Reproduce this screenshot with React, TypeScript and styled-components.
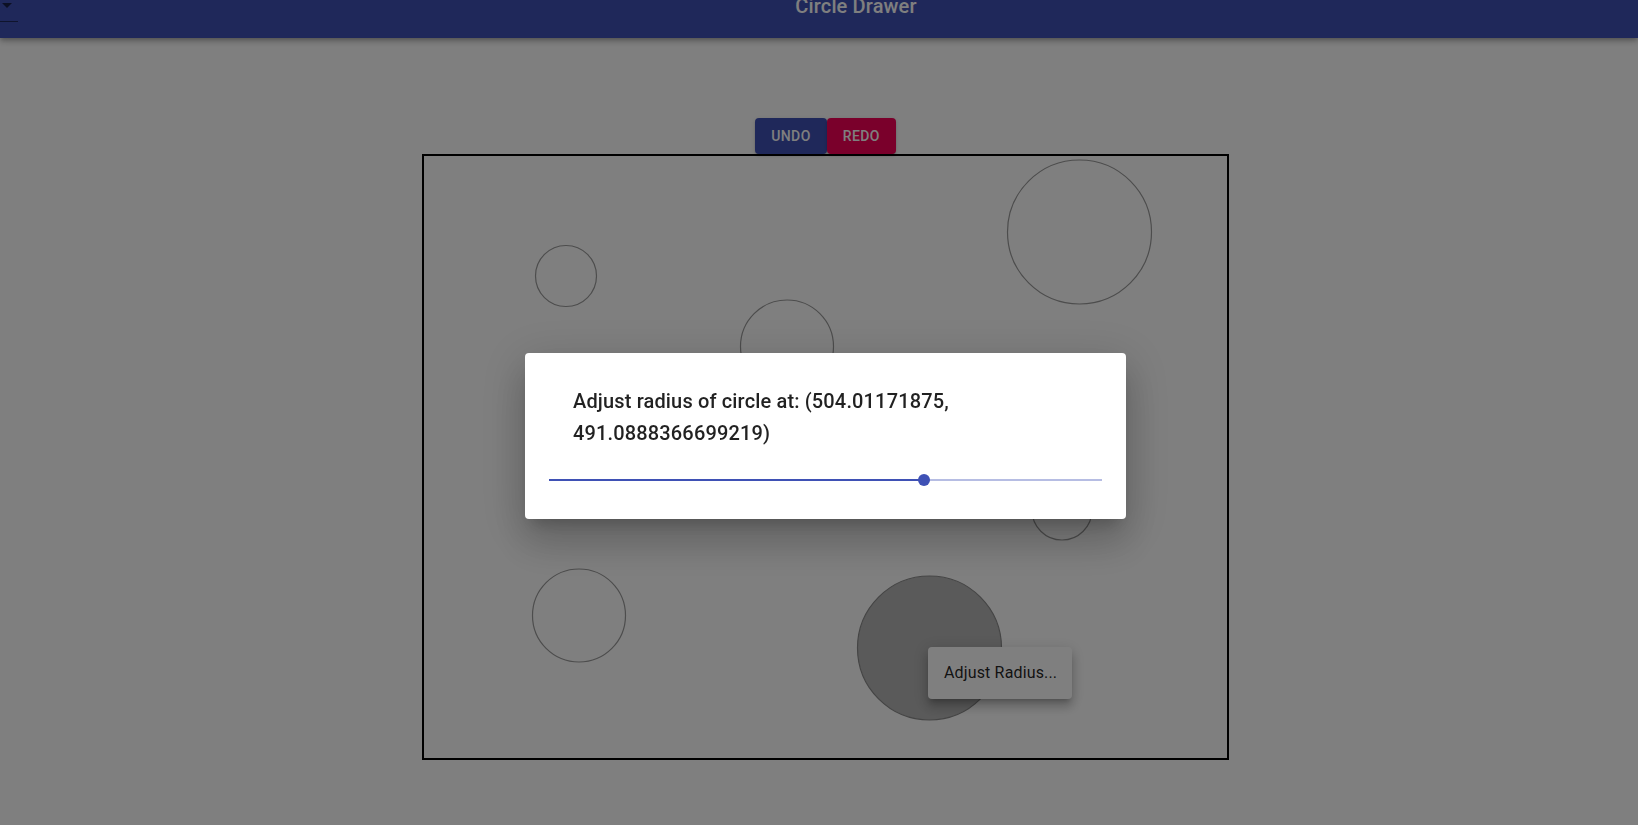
import React from "react";
import styled, { createGlobalStyle } from "styled-components";

const GlobalStyle = createGlobalStyle`
  html, body {
    margin: 0;
    padding: 0;
    background: #ffffff;
    font-family: Roboto, "Liberation Sans", Arial, sans-serif;
    overflow: hidden;
  }
  * { box-sizing: border-box; }
`;

const AppBar = styled.header`
  position: relative;
  z-index: 2;
  display: flex;
  align-items: flex-start;
  height: 38px;
  overflow: hidden;
  background: #3f51b5;
  color: #ffffff;
  box-shadow: 0px 2px 4px -1px rgba(0, 0, 0, 0.2), 0px 4px 5px 0px rgba(0, 0, 0, 0.14),
    0px 1px 10px 0px rgba(0, 0, 0, 0.12);
`;

const SelectBox = styled.div`
  box-sizing: content-box;
  width: 18px;
  height: 21px;
  flex: none;
  display: flex;
  align-items: flex-start;
  border-bottom: 1px solid rgba(0, 0, 0, 0.5);
`;

const Arrow = styled.span`
  display: block;
  margin: 3px 0 0 2px;
  width: 0;
  height: 0;
  border-left: 5px solid transparent;
  border-right: 5px solid transparent;
  border-top: 5px solid rgba(0, 0, 0, 0.6);
`;

const Title = styled.h1`
  flex: 1;
  margin: -10px 0 0 0;
  padding-left: 56px;
  text-align: center;
  font-size: 20px;
  font-weight: 500;
  line-height: 32px;
  letter-spacing: 0.0075em;
`;

const Main = styled.main`
  display: flex;
  flex-direction: column;
  align-items: center;
  padding: 80px 0 0 13px;
`;

const ButtonRow = styled.div`
  display: flex;
`;

const ActionButton = styled.button<{ $bg: string }>`
  display: inline-flex;
  align-items: center;
  justify-content: center;
  min-width: 64px;
  height: 36px;
  padding: 6px 16px;
  border: none;
  border-radius: 4px;
  background: ${(p) => p.$bg};
  color: #ffffff;
  font-family: Roboto, "Liberation Sans", Arial, sans-serif;
  font-size: 14px;
  font-weight: 500;
  line-height: 1.75;
  letter-spacing: 0.02857em;
  text-transform: uppercase;
  box-shadow: 0px 3px 1px -2px rgba(0, 0, 0, 0.2), 0px 2px 2px 0px rgba(0, 0, 0, 0.14),
    0px 1px 5px 0px rgba(0, 0, 0, 0.12);
  cursor: pointer;
`;

const Canvas = styled.div`
  position: relative;
  box-sizing: content-box;
  width: 803px;
  height: 602px;
  border: 2px solid #000000;
`;

const Drawing = styled.svg`
  display: block;
`;

const ContextMenu = styled.ul<{ $x: number; $y: number }>`
  position: absolute;
  left: ${(p) => p.$x}px;
  top: ${(p) => p.$y}px;
  margin: 0;
  padding: 8px 0;
  list-style: none;
  width: 144px;
  background: #ffffff;
  border-radius: 4px;
  box-shadow: 0px 5px 5px -3px rgba(0, 0, 0, 0.2), 0px 8px 10px 1px rgba(0, 0, 0, 0.14),
    0px 3px 14px 2px rgba(0, 0, 0, 0.12);
`;

const MenuItem = styled.li`
  padding: 6px 16px;
  font-size: 16px;
  font-weight: 400;
  line-height: 24px;
  letter-spacing: 0.00938em;
  color: rgba(0, 0, 0, 0.87);
  white-space: nowrap;
`;

const Backdrop = styled.div`
  position: fixed;
  inset: 0;
  z-index: 10;
  background: rgba(0, 0, 0, 0.5);
`;

const DialogLayer = styled.div`
  position: fixed;
  inset: 0;
  z-index: 11;
  display: flex;
  align-items: center;
  justify-content: center;
  padding: 46px 0 0 13px;
`;

const DialogPaper = styled.div`
  width: 601px;
  display: flex;
  flex-direction: column;
  padding: 32px 24px 25px;
  background: #ffffff;
  border-radius: 4px;
  box-shadow: 0px 11px 15px -7px rgba(0, 0, 0, 0.2), 0px 24px 38px 3px rgba(0, 0, 0, 0.14),
    0px 9px 46px 8px rgba(0, 0, 0, 0.12);
`;

const DialogText = styled.h2`
  margin: 0;
  padding: 0 24px;
  font-size: 20px;
  font-weight: 500;
  line-height: 32px;
  letter-spacing: 0.0075em;
  color: rgba(0, 0, 0, 0.87);
`;

const SliderRoot = styled.div`
  position: relative;
  height: 28px;
  margin-top: 17px;
  display: flex;
  align-items: center;
`;

const Rail = styled.div`
  width: 100%;
  height: 2px;
`;

const Thumb = styled.span`
  position: absolute;
  top: 50%;
  width: 12px;
  height: 12px;
  margin: -6px 0 0 -6px;
  border-radius: 50%;
  background: #3f51b5;
`;

type Circle = { x: number; y: number; r: number; selected?: boolean };

const circles: Circle[] = [
  { x: 142, y: 120, r: 30.5 },
  { x: 655.5, y: 76, r: 72 },
  { x: 363, y: 190.5, r: 46.5 },
  { x: 638, y: 354, r: 30 },
  { x: 155, y: 459.5, r: 46.5 },
  { x: 505.5, y: 492, r: 72, selected: true },
];

export default function App() {
  const value = 67.76;
  return (
    <>
      <GlobalStyle />
      <AppBar>
        <SelectBox>
          <Arrow />
        </SelectBox>
        <Title>Circle Drawer</Title>
      </AppBar>
      <Main>
        <ButtonRow>
          <ActionButton $bg="#3f51b5">Undo</ActionButton>
          <ActionButton $bg="#f50057">Redo</ActionButton>
        </ButtonRow>
        <Canvas>
          <Drawing width={803} height={602} viewBox="0 0 803 602">
            {circles.map((c, i) => (
              <circle
                key={i}
                cx={c.x}
                cy={c.y}
                r={c.r}
                fill={c.selected ? "#b4b4b4" : "none"}
                stroke={c.selected ? "#8a8a8a" : "#9a9a9a"}
                strokeWidth={1.2}
              />
            ))}
          </Drawing>
          <ContextMenu $x={504} $y={491}>
            <MenuItem>Adjust Radius...</MenuItem>
          </ContextMenu>
        </Canvas>
      </Main>
      <Backdrop />
      <DialogLayer>
        <DialogPaper>
          <DialogText>Adjust radius of circle at: (504.01171875, 491.0888366699219)</DialogText>
          <SliderRoot>
            <Rail
              style={{
                background: `linear-gradient(to right, #3f51b5 ${value}%, #b6bde3 ${value}%)`,
              }}
            />
            <Thumb style={{ left: `${value}%` }} />
          </SliderRoot>
        </DialogPaper>
      </DialogLayer>
    </>
  );
}
